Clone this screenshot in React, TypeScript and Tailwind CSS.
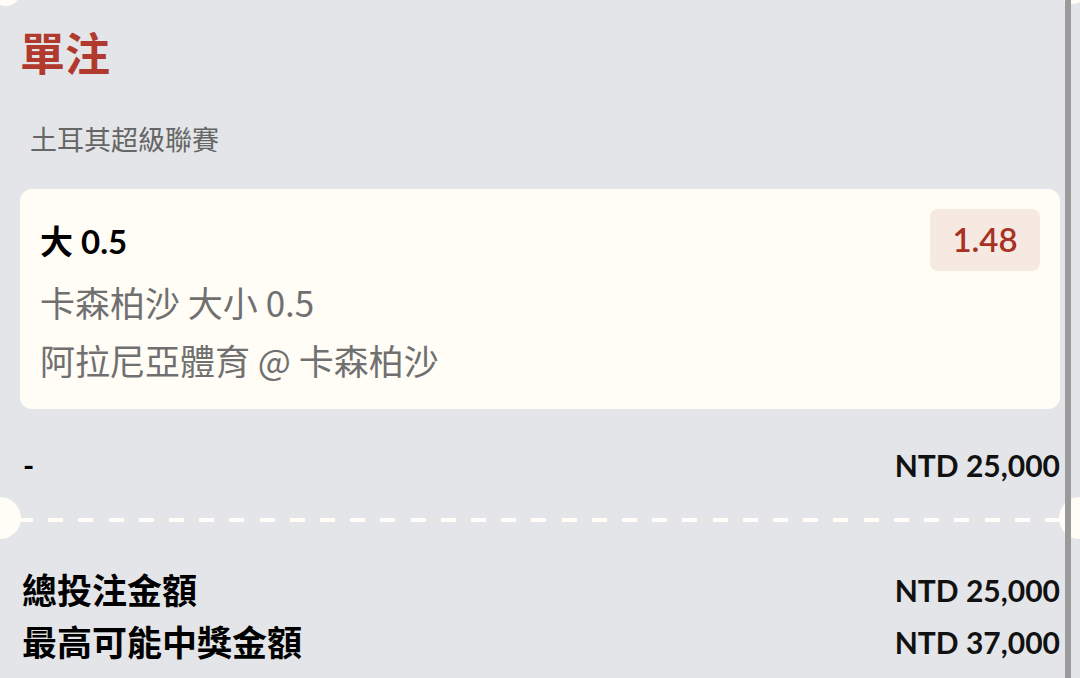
const font = { fontFamily: 'Lato, "Noto Sans CJK TC", "Noto Sans", sans-serif' };
const cjk = { fontFamily: '"Noto Sans CJK TC", "Noto Sans", sans-serif' };

function AmountRow({ label, amount }: { label: string; amount: string }) {
  return (
    <div className="flex items-center justify-between">
      <span className="text-[35px] font-bold leading-[52px] text-black">{label}</span>
      <span className="text-[30px] font-bold leading-[52px] text-[#111]">{amount}</span>
    </div>
  );
}

export default function App() {
  return (
    <div className="relative h-[678px] w-[1080px] overflow-hidden bg-[#e4e5e8]" style={font}>
      {/* ticket notches */}
      <div className="absolute -left-[8px] -top-[22px] h-[28px] w-[28px] rounded-full bg-[#fffdf5]" />
      <div className="absolute -right-[6px] -top-[22px] h-[26px] w-[26px] rounded-full bg-[#fffdf5]" />
      <div className="absolute -left-[21px] top-[497px] h-[42px] w-[42px] rounded-full bg-[#fffdf5]" />
      <div className="absolute -right-[21px] top-[497px] h-[42px] w-[42px] rounded-full bg-[#fffdf5]" />

      <div className="pl-[20px] pr-[20px] pt-[26px]">
        <h1 className="text-[45px] font-bold leading-[56px] text-[#b03a2e]">單注</h1>
        <div className="mt-[41px] pl-[10px] text-[27px] leading-[34px] text-[#666]">土耳其超級聯賽</div>

        <div className="mt-[32px] rounded-[12px] bg-[#fffdf6] px-[20px] pb-[20px] pt-[20px]">
          <div className="flex items-start justify-between">
            <div className="pt-[16px] text-[33px] font-bold leading-[32px] text-black">大 0.5</div>
            <div className="flex h-[62px] w-[110px] items-center justify-center rounded-[8px] bg-[#f5e9e1] text-[33px] font-semibold text-[#a83224]">
              1.48
            </div>
          </div>
          <div className="text-[#707070]" style={cjk}>
            <div className="mt-[2px] text-[35px] leading-[58px]">卡森柏沙 大小 0.5</div>
            <div className="text-[35px] leading-[58px]">阿拉尼亞體育 @ 卡森柏沙</div>
          </div>
        </div>

        <div className="mt-[30px] flex items-center justify-between">
          <span className="pl-[3px] text-[30px] font-bold leading-[52px] text-black">-</span>
          <span className="text-[30px] font-bold leading-[52px] text-[#111]">NTD 25,000</span>
        </div>

        <div className="mt-[27px] -ml-[2px] flex h-[4px] justify-between overflow-hidden">
          {Array.from({ length: 35 }).map((_, i) => (
            <div key={i} className="h-[4px] w-[15px] shrink-0 bg-[#fffdf5]" />
          ))}
        </div>

        <div className="mt-[42px] pl-[2px]">
          <AmountRow label="總投注金額" amount="NTD 25,000" />
          <AmountRow label="最高可能中獎金額" amount="NTD 37,000" />
        </div>
      </div>

      {/* right edge strip */}
      <div className="absolute bottom-0 right-[9px] top-0 w-[6px] bg-[#9a9a9a]" />
    </div>
  );
}
